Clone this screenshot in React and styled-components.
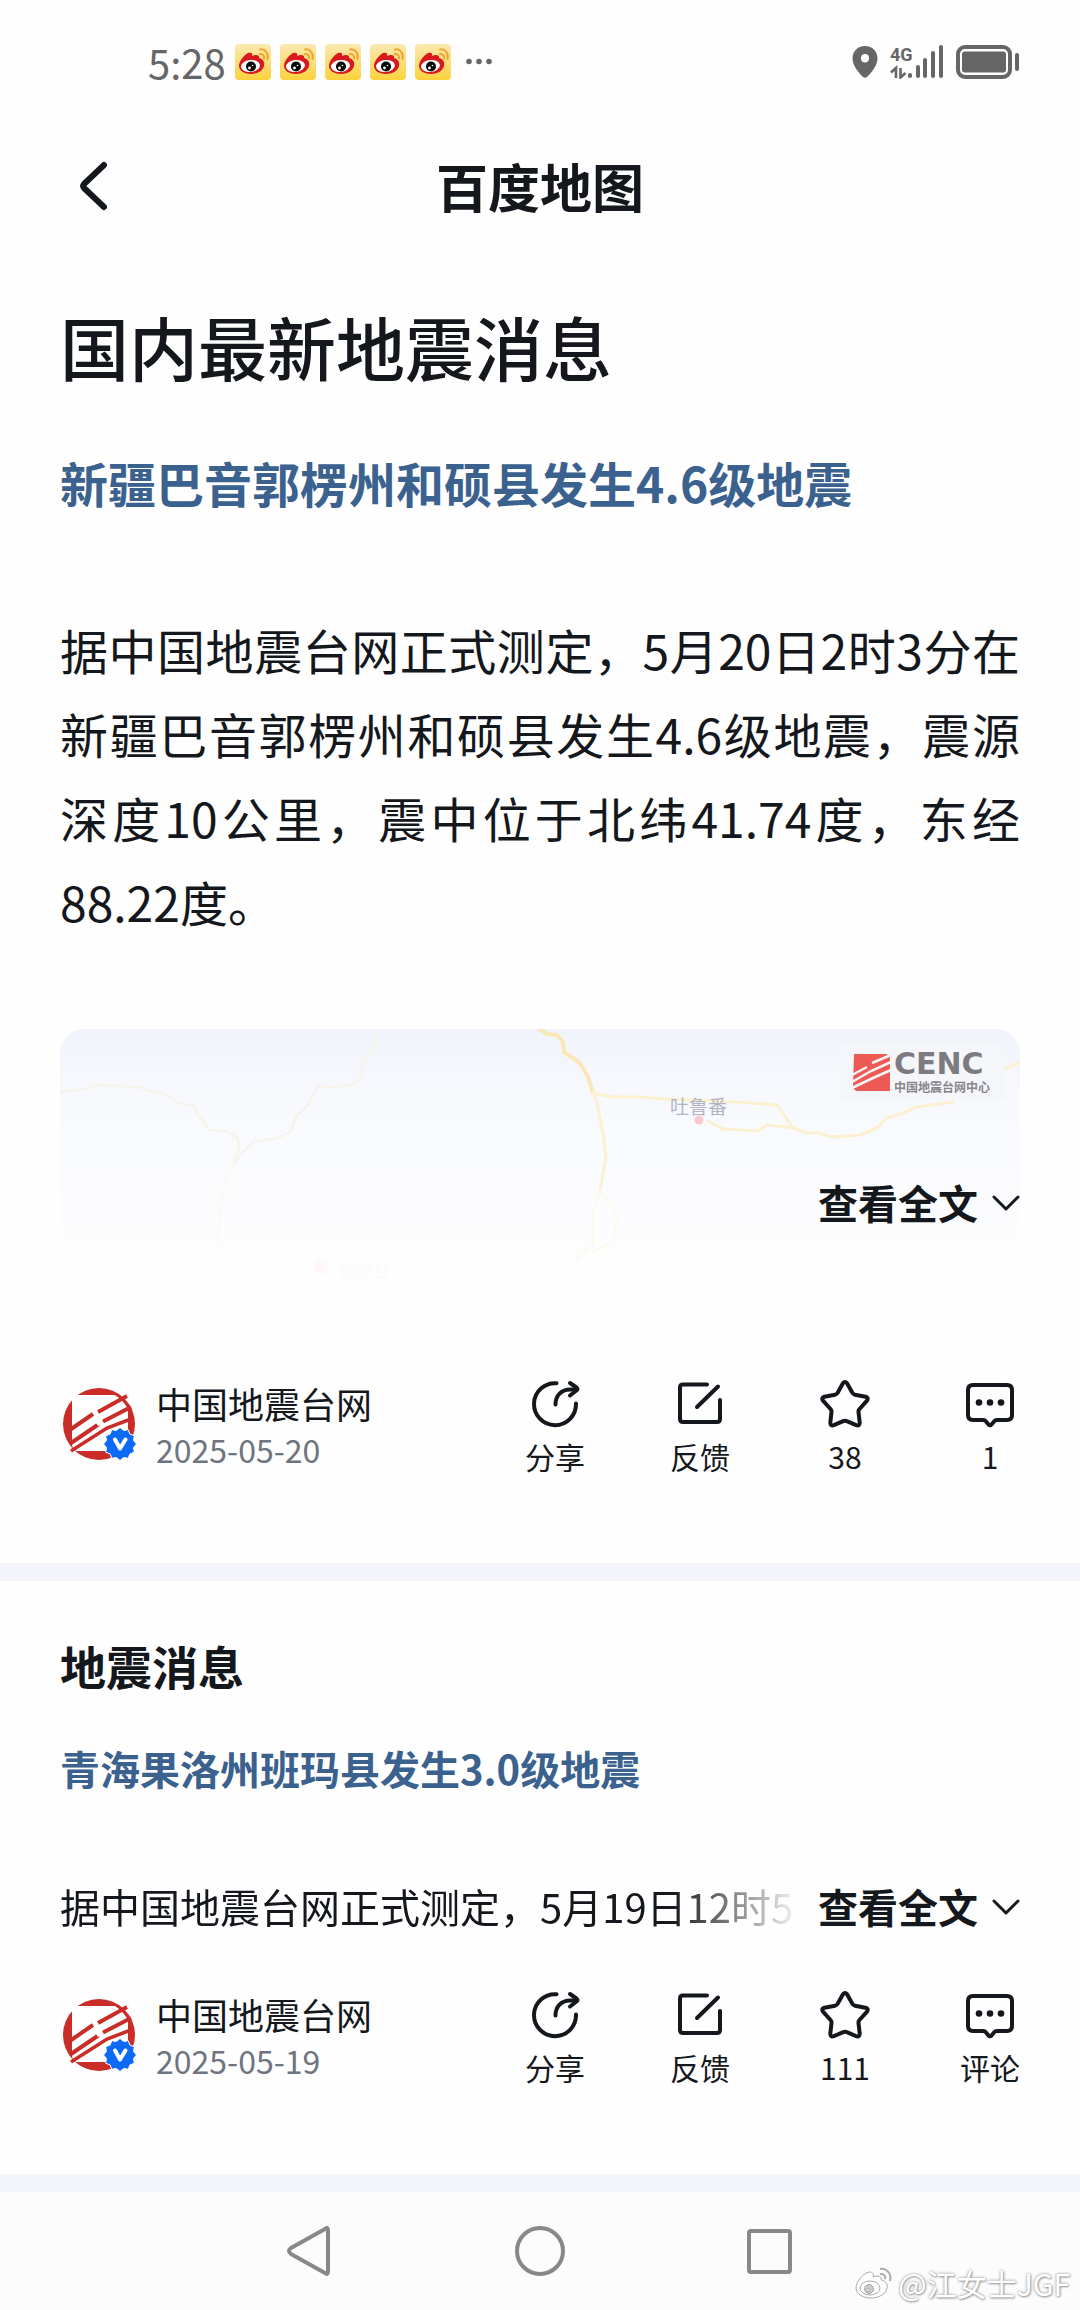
import React from "react"
import styled, { createGlobalStyle } from "styled-components"

const GlobalStyle = createGlobalStyle`
  * {
    box-sizing: border-box;
  }
  body {
    margin: 0;
    background: #fefefe;
    color: #14171c;
    font-family: "Noto Sans CJK SC", sans-serif;
  }
  h1, h2, h3, p {
    margin: 0;
  }
  button {
    padding: 0;
    border: 0;
    background: none;
    color: inherit;
    font-family: inherit;
    cursor: pointer;
  }
  svg {
    display: block;
  }
`

const Page = styled.div`
  display: flex;
  flex-direction: column;
  min-height: 100vh;
`

const StatusBar = styled.div`
  display: flex;
  align-items: center;
  justify-content: space-between;
  height: 124px;
  padding: 0 60px 0 148px;
  color: #666;
`

const StatusGroup = styled.div`
  display: flex;
  align-items: center;
  gap: ${props => props.gap}px;
`

const Clock = styled.span`
  font-size: 40px;
  line-height: 48px;
`

const TopBar = styled.header`
  display: grid;
  grid-template-columns: 1fr auto 1fr;
  align-items: center;
  height: 128px;
  padding: 0 72px;
`

const BackButton = styled.button`
  justify-self: start;
`

const TopTitle = styled.h1`
  padding-bottom: 4px;
  font-size: 52px;
  line-height: 64px;
  font-weight: 700;
`

const Section = styled.section`
  padding: ${props => props.top}px 60px 87px;
  border-bottom: 18px solid #f4f5fb;
`

const Headline = styled.h2`
  font-size: 69px;
  line-height: 96px;
  font-weight: 500;
`

const SubHeadline = styled.h2`
  font-size: 46px;
  line-height: 64px;
  font-weight: 700;
`

const NewsTitle = styled.h3`
  margin-top: ${props => (props.$large ? 52 : 41)}px;
  font-size: ${props => (props.$large ? 48 : 40)}px;
  line-height: ${props => (props.$large ? 72 : 60)}px;
  font-weight: 700;

  a {
    color: #3b618f;
    text-decoration: none;
  }
`

const Paragraph = styled.p`
  margin-top: 89px;
  font-size: 48px;
  line-height: 84px;
  text-align: justify;
`

const MapCard = styled.div`
  position: relative;
  margin: 86px 0 91px;
  border-radius: 24px 24px 0 0;
  overflow: hidden;
  background: linear-gradient(#f1f3fc 0, #f6f8fd 50px, #fafbfe 130px, #fefefe 250px);

  > svg {
    width: 100%;
    height: auto;
  }
`

const MapMore = styled.div`
  position: absolute;
  right: 0;
  bottom: 57px;
`

const MoreButton = styled.button`
  display: flex;
  align-items: center;
  gap: 14px;
  font-size: 40px;
  line-height: 60px;
  font-weight: 700;
  white-space: nowrap;

  svg {
    margin-top: 4px;
  }
`

const ExcerptRow = styled.div`
  display: flex;
  gap: 16px;
  margin: 78px 0 55px;
`

const Excerpt = styled.p`
  flex: 1;
  min-width: 0;
  overflow: hidden;
  white-space: nowrap;
  font-size: 40px;
  line-height: 60px;
  mask-image: linear-gradient(to right, #000 calc(100% - 130px), transparent);
`

const Footer = styled.footer`
  display: flex;
  justify-content: space-between;
  min-height: 96px;
`

const Author = styled.div`
  display: flex;
  gap: 18px;

  > svg {
    margin-top: 8px;
  }
`

const AuthorName = styled.div`
  font-size: 36px;
  line-height: 46px;
`

const PostDate = styled.time`
  display: block;
  font-size: 32px;
  line-height: 46px;
  color: #6f757e;
`

const Actions = styled.div`
  display: flex;
  gap: 85px;
`

const ActionButton = styled.button`
  display: flex;
  flex-direction: column;
  align-items: center;
  gap: 10px;
  width: 60px;
  font-size: 30px;
  line-height: 36px;
`

const NavBar = styled.nav`
  position: relative;
  flex: 1;
  display: flex;
  align-items: center;
  justify-content: center;
  gap: 174px;
  min-height: 118px;
  background: #fcfcfc;
`

const NavButton = styled.button`
  svg {
    width: 56px;
    height: 56px;
    fill: none;
    stroke: #888;
    stroke-width: 4;
    stroke-linejoin: round;
  }
`

const Watermark = styled.div`
  position: absolute;
  right: 10px;
  bottom: 8px;
  display: flex;
  align-items: center;
  gap: 4px;
  color: #fff;
  font-size: 30px;
  line-height: 38px;
  text-shadow: 0 0 3px #888, 1px 1px 2px #aaa;
`

const WeiboIcon = () => (
  <svg width="36" height="36" viewBox="0 0 36 36">
    <defs>
      <linearGradient id="weibo" x1="0" y1="0" x2="0" y2="1">
        <stop offset="0" stopColor="#fbe9b4" />
        <stop offset="1" stopColor="#fbd23c" />
      </linearGradient>
    </defs>
    <rect width="36" height="36" rx="4" fill="url(#weibo)" />
    <path
      d="M4 22C4 17 9 11 13 9c3-1 5 0 4 3 4-2 8-1 7 2 4 1 6 4 5 8-1 5-7 8-13 8S4 27 4 22z"
      fill="#d9191d"
    />
    <ellipse cx="15.5" cy="22" rx="9.5" ry="6" fill="#fff" transform="rotate(-6 15.5 22)" />
    <circle cx="16" cy="22.5" r="5" fill="#080808" />
    <circle cx="14.5" cy="24" r="1.4" fill="#fff" />
    <circle cx="17.5" cy="21.5" r="0.8" fill="#fff" />
    <path
      d="M25 5.5c5-1 9 4 7.500 9.500M25 10c3-.5 4.500 2 4 4.500"
      fill="none"
      stroke="#eda52f"
      strokeWidth="2"
      strokeLinecap="round"
    />
  </svg>
)

const DotsIcon = () => (
  <svg width="34" height="36" viewBox="0 0 34 36" fill="#666">
    <circle cx="9" cy="17.5" r="2.8" />
    <circle cx="19" cy="17.5" r="2.8" />
    <circle cx="29" cy="17.5" r="2.8" />
  </svg>
)

const PinIcon = () => (
  <svg width="26" height="32" viewBox="0 0 26 32">
    <path
      d="M13 0C5.500 0 .5 5.500.5 12.500c0 7 6 14 10.500 18.500q2 1.500 4 0c4.500-4.500 10.500-11.500 10.500-18.500C25.500 5.500 20.500 0 13 0zm0 8a4 4.200 0 1 1 0 8.400A4 4.200 0 0 1 13 8z"
      fill="#666"
      fillRule="evenodd"
    />
  </svg>
)

const SignalIcon = () => (
  <svg width="54" height="34" viewBox="0 0 54 34">
    <g fill="none" stroke="#666" strokeLinecap="round" strokeWidth="4">
      <path d="M20 31v-1M28 31v-9M35 31v-16M43 31v-23M51 31v-29" />
    </g>
    <g fill="none" stroke="#666" strokeWidth="2.6">
      <path d="M6 33V23L1 27.500M10.500 23v9.500l5-4.500" />
    </g>
    <text
      x="0"
      y="16"
      fill="#666"
      fontFamily="Roboto, sans-serif"
      fontSize="18"
      fontWeight="700"
    >
      4G
    </text>
  </svg>
)

const BatteryIcon = () => (
  <svg width="64" height="34" viewBox="0 0 64 34">
    <rect x="2" y="2" width="52" height="30" rx="7" fill="none" stroke="#666" strokeWidth="4" />
    <rect x="6" y="6.5" width="44" height="21" rx="3" fill="#666" />
    <rect x="59" y="8" width="4" height="18" rx="2" fill="#666" />
  </svg>
)

const BackIcon = () => (
  <svg width="42" height="54" viewBox="0 0 42 54">
    <path
      d="M32 4L12 23q-2 2 0 4L32 46"
      fill="none"
      stroke="#14171c"
      strokeWidth="6"
      strokeLinecap="round"
    />
  </svg>
)

const ChevronIcon = () => (
  <svg width="28" height="20" viewBox="0 0 28 20">
    <path
      d="M2 3l12 12L26 3"
      fill="none"
      stroke="#14171c"
      strokeWidth="3"
      strokeLinecap="round"
      strokeLinejoin="round"
    />
  </svg>
)

const ActionSvg = props => (
  <svg
    width="50"
    height="48"
    viewBox="0 0 50 48"
    fill="none"
    stroke="#14171c"
    strokeWidth="4"
    strokeLinecap="round"
    strokeLinejoin="round"
  >
    {props.children}
  </svg>
)

const icons = {
  share: (
    <ActionSvg>
      <path d="M26.500 3.200A21 21 0 1 0 46 23.500" />
      <path d="M25.500 24.500C25.500 15 32 9.500 40 9.500h6" />
      <path d="M40 3l6.500 4.500q2 1.500 0 3L40 15.500" />
    </ActionSvg>
  ),
  edit: (
    <ActionSvg>
      <path d="M32 4.500H8q-3 0-3 3V39q0 3 3 3h34q3 0 3-3V20" />
      <path d="M22 27L43 6.500" />
    </ActionSvg>
  ),
  star: (
    <ActionSvg>
      <path d="M22.800 3.500q2.200-3 4.400 0l5 9q.8 1.800 2.800 2.200l10.500 2q3.500 1 1.500 4L39.500 29q-1.200 1.400-1 3l1.200 10.500q0 3.800-3.500 2.700l-9.400-4q-1.800-.8-3.600 0l-9.400 4q-3.500 1.100-3.500-2.700L11.500 32q.2-1.600-1-3L3 20.700q-2-3 1.500-4l10.500-2q2-.4 2.800-2.200z" />
    </ActionSvg>
  ),
  comment: (
    <ActionSvg>
      <path d="M8 5h34q5 0 5 5v25q0 5-5 5H32q-2 0-3 1.500l-2.500 3q-1.500 1.500-3 0L21 41.500Q20 40 18 40H8q-5 0-5-5V10q0-5 5-5z" />
      <g fill="#14171c" stroke="none">
        <circle cx="14" cy="22.5" r="3.3" />
        <circle cx="25" cy="22.5" r="3.3" />
        <circle cx="36" cy="22.5" r="3.3" />
      </g>
    </ActionSvg>
  )
}

const badgePoints = Array.from({ length: 24 }, (_, i) => {
  const r = i % 2 ? 14 : 16.5
  const a = (i * Math.PI) / 12
  return `${57 + r * Math.cos(a)},${56 + r * Math.sin(a)}`
}).join(" ")

const AvatarIcon = () => (
  <svg width="78" height="76" viewBox="-3 0 78 76">
    <circle cx="36" cy="36" r="36" fill="#ca2c28" />
    <path d="M9 9q0-2 2-2h41q8 5 13 14v31q0 11-11 11H13q-4-3-4-6z" fill="#fff" />
    <g fill="none" stroke="#ca2c28" strokeWidth="4">
      <path d="M6 42.500L30 26M35 24L64 8" />
      <path d="M8 55L36 36M40 33.500L68 19" />
    </g>
    <path d="M8 63L44 40L68 31" fill="none" stroke="#ca2c28" strokeWidth="3.5" />
    <path d="M31 29l6 8" fill="none" stroke="#fff" strokeWidth="4" />
    <polygon
      points={badgePoints}
      fill="#0c6af5"
      stroke="#fff"
      strokeWidth="1"
      strokeLinejoin="round"
    />
    <path
      d="M52 51.500L57 60.500l5.500-9"
      fill="none"
      stroke="#fff"
      strokeWidth="4"
      strokeLinecap="round"
      strokeLinejoin="round"
    />
  </svg>
)

const QuakeMap = () => (
  <svg viewBox="0 0 960 260">
    <g fill="none" strokeLinejoin="round" strokeLinecap="round">
      <g stroke="#f6f4ea" strokeWidth="2.5">
        <path d="M0 63L23 60 38 56 80 58 87 61 107 66 117 73 135 78 138 86 150 101 165 102 178 109 179 121 172 134" />
        <path d="M317 0V13L302 36V49L292 56 273 58 258 57 248 76 237 86 230 103 218 109 193 113 182 124 173 136" />
      </g>
      <path d="M172 134L165 154 160 181 158 211" stroke="#fbfaf6" strokeWidth="4" />
      <path d="M480 0L487 5 497 6 503 13 504 23 520 34 528 48 533 64" stroke="#f9e7b6" strokeWidth="4" />
      <path d="M533 64L537 74 543 104 546 128 540 161" stroke="#fbf0d0" strokeWidth="3" />
      <path
        d="M540 161L533 181V214L515 231M540 161L552 178 557 194 552 213 533 223"
        stroke="#fdf9ec"
        strokeWidth="2"
      />
      <path d="M515 231L480 248" stroke="#fefcf6" strokeWidth="2" />
      <g stroke="#fbf0cf" strokeWidth="3">
        <path d="M533 64L552 68H580L603 70 677 73 717 76 733 99" />
        <path d="M648 92L663 100 698 102 707 96 733 99 747 104H758L773 108 800 106 817 99 827 89 843 84 857 78 893 73" />
        <path d="M946 40L960 33" />
      </g>
    </g>
    <text x="610" y="85" fontSize="19" fill="#b3b5c4">
      吐鲁番
    </text>
    <circle cx="639" cy="91" r="4.5" fill="#f6c9cf" />
    <circle cx="261" cy="238" r="7" fill="#fef8f8" />
    <text x="279" y="248" fontSize="17" fill="#fcfbfc">
      和静县
    </text>
    <rect x="780" y="14" width="165" height="57" fill="#f5f6fa" />
    <path d="M794 25h32q4 1 4 5v32h-33q-4-1-4-5z" fill="#ec5a56" />
    <g stroke="#f8f3f6" strokeWidth="2.5" fill="none">
      <path d="M792 46L807 38M812 34L831 26M792 53L811 42 831 33M792 59L813 49 831 41" />
    </g>
    <text
      x="834"
      y="45"
      fontFamily="DejaVu Sans, sans-serif"
      fontSize="30"
      fontWeight="700"
      fill="#7d7b82"
    >
      CENC
    </text>
    <text x="834" y="63" fontSize="12" fontWeight="700" fill="#88868d">
      中国地震台网中心
    </text>
  </svg>
)

const ViewMore = () => (
  <MoreButton type="button">
    查看全文
    <ChevronIcon />
  </MoreButton>
)

const PostFooter = props => (
  <Footer>
    <Author>
      <AvatarIcon />
      <div>
        <AuthorName>中国地震台网</AuthorName>
        <PostDate dateTime={props.date}>{props.date}</PostDate>
      </div>
    </Author>
    <Actions>
      {props.actions.map(action => (
        <ActionButton type="button" key={action.icon}>
          {icons[action.icon]}
          {action.label}
        </ActionButton>
      ))}
    </Actions>
  </Footer>
)

const firstActions = [
  { icon: "share", label: "分享" },
  { icon: "edit", label: "反馈" },
  { icon: "star", label: "38" },
  { icon: "comment", label: "1" }
]

const secondActions = [
  { icon: "share", label: "分享" },
  { icon: "edit", label: "反馈" },
  { icon: "star", label: "111" },
  { icon: "comment", label: "评论" }
]

const App = () => {
  return (
    <Page>
      <GlobalStyle />
      <StatusBar>
        <StatusGroup gap={9}>
          <Clock>5:28</Clock>
          {[1, 2, 3, 4, 5].map(n => (
            <WeiboIcon key={n} />
          ))}
          <DotsIcon />
        </StatusGroup>
        <StatusGroup gap={12}>
          <PinIcon />
          <SignalIcon />
          <BatteryIcon />
        </StatusGroup>
      </StatusBar>
      <TopBar>
        <BackButton type="button" aria-label="返回">
          <BackIcon />
        </BackButton>
        <TopTitle>百度地图</TopTitle>
      </TopBar>

      <Section top={46}>
        <Headline>国内最新地震消息</Headline>
        <NewsTitle $large>
          <a href="#xinjiang">新疆巴音郭楞州和硕县发生4.6级地震</a>
        </NewsTitle>
        <Paragraph>
          据中国地震台网正式测定，5月20日2时3分在新疆巴音郭楞州和硕县发生4.6级地震，震源深度10公里，震中位于北纬41.74度，东经88.22度。
        </Paragraph>
        <MapCard>
          <QuakeMap />
          <MapMore>
            <ViewMore />
          </MapMore>
        </MapCard>
        <PostFooter date="2025-05-20" actions={firstActions} />
      </Section>

      <Section top={52}>
        <SubHeadline>地震消息</SubHeadline>
        <NewsTitle>
          <a href="#qinghai">青海果洛州班玛县发生3.0级地震</a>
        </NewsTitle>
        <ExcerptRow>
          <Excerpt>据中国地震台网正式测定，5月19日12时5</Excerpt>
          <ViewMore />
        </ExcerptRow>
        <PostFooter date="2025-05-19" actions={secondActions} />
      </Section>

      <NavBar>
        <NavButton type="button" aria-label="后退">
          <svg viewBox="0 0 56 56">
            <path d="M46 7.500V48.500q0 4-3 1.500L9 31q-4-3 0-6L43 6q3-2.500 3 1.500z" />
          </svg>
        </NavButton>
        <NavButton type="button" aria-label="主页">
          <svg viewBox="0 0 56 56">
            <circle cx="28" cy="28" r="23" />
          </svg>
        </NavButton>
        <NavButton type="button" aria-label="最近任务">
          <svg viewBox="0 0 56 56">
            <rect x="7" y="8" width="41" height="41" rx="2" />
          </svg>
        </NavButton>
        <Watermark>
          <svg width="40" height="34" viewBox="0 0 40 34" stroke="#aaa" strokeWidth="1">
            <path
              d="M2 22C2 15 10 7 15 6c4 0 5 2 4 5 5-2 9-1 8 3 5 1 7 4 6 8-1 6-8 10-16 10S2 28 2 22z"
              fill="#fff"
            />
            <ellipse cx="16" cy="22" rx="10" ry="7" fill="#fff" />
            <circle cx="15" cy="23" r="4.5" fill="#ccc" />
            <circle cx="14" cy="24" r="1.5" fill="#fff" />
            <path d="M26 3c6-1 12 4 10 12M26 8c4-.5 6 2 5 5" fill="none" strokeWidth="2" />
          </svg>
          @江女士JGF
        </Watermark>
      </NavBar>
    </Page>
  )
}

export default App
